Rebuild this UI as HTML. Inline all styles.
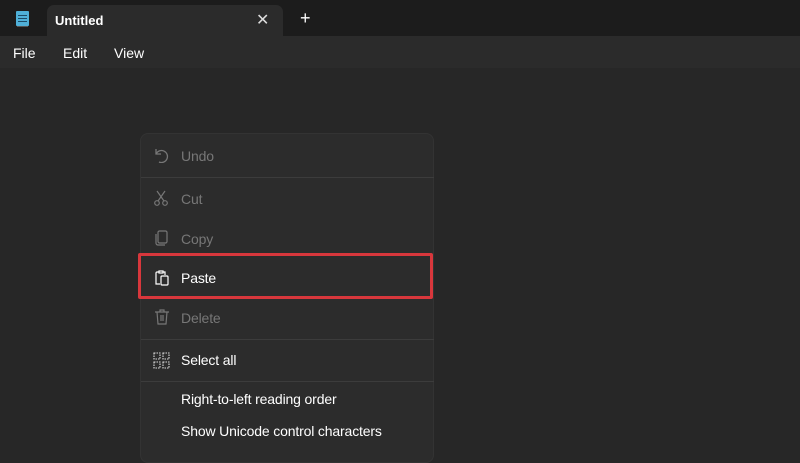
<!DOCTYPE html>
<html><head><style>
*{margin:0;padding:0;box-sizing:border-box}
body{width:800px;height:450px;overflow:hidden;background:#272727;font-family:"Liberation Sans",sans-serif;position:relative}
.title{position:absolute;left:0;top:0;width:800px;height:36px;background:#1c1c1c}
.tab{position:absolute;left:47px;top:5px;width:236px;height:31px;background:#2b2b2b;border-radius:7px 7px 0 0;color:#fff;font-size:13px;font-weight:bold}
.menubar{position:absolute;left:0;top:36px;width:800px;height:32px;background:#2b2b2b;color:#fff;font-size:14px}
.menubar span{position:absolute;top:9px}
.ctx{position:absolute;left:140px;top:133px;width:294px;height:330px;background:#2c2c2c;border:1px solid #333;border-radius:8px;font-size:14px;letter-spacing:-0.15px}
.it{position:absolute;left:40px;color:#fff}
.dis{color:#777}
.sep{position:absolute;left:0;width:293px;height:1px;background:#3c3c3c}
svg{position:absolute}
</style></head><body>
<div class="title">
<svg style="left:16px;top:11px" width="13" height="16" viewBox="0 0 13 16"><rect x="0" y="0" width="13" height="15" rx="1" fill="#4fb0d8"/><rect x="2" y="4" width="9" height="1" fill="#1c4a66"/><rect x="2" y="7" width="9" height="1" fill="#1c4a66"/><rect x="2" y="10" width="9" height="1" fill="#1c4a66"/><rect x="1" y="15" width="11" height="1" fill="#555"/></svg>
<div class="tab"><span style="position:absolute;left:8px;top:8px">Untitled</span>
<span style="position:absolute;left:209px;top:5px;font-weight:normal;font-size:16px;color:#ddd">✕</span></div>
<span style="position:absolute;left:300px;top:8px;color:#fff;font-size:18px">+</span>
</div>
<div class="menubar"><span style="left:13px">File</span><span style="left:63px">Edit</span><span style="left:114px">View</span></div>
<div class="ctx">
<svg style="left:13px;top:13px" width="16" height="16" viewBox="0 0 16 16" fill="none" stroke="#777" stroke-width="1.3"><path d="M2 2v5h5"/><path d="M2 7a6 6 0 1 1 3 8"/></svg>
<div class="it dis" style="top:14px">Undo</div>
<div class="sep" style="top:43px"></div>
<svg style="left:12px;top:56px" width="16" height="16" viewBox="0 0 16 16" fill="none" stroke="#777" stroke-width="1.2"><path d="M4 1l7 10M12 1L5 11"/><circle cx="4" cy="13" r="2.3"/><circle cx="12" cy="13" r="2.3"/></svg>
<div class="it dis" style="top:57px">Cut</div>
<svg style="left:13px;top:96px" width="16" height="16" viewBox="0 0 16 16" fill="none" stroke="#777" stroke-width="1.2"><rect x="4" y="1" width="9" height="12" rx="1.5"/><path d="M2 4v9a2 2 0 0 0 2 2h7"/></svg>
<div class="it dis" style="top:97px">Copy</div>
<svg style="left:13px;top:136px" width="16" height="16" viewBox="0 0 16 16" fill="none" stroke="#fff" stroke-width="1.2"><path d="M5 2H3a1 1 0 0 0-1 1v11h4"/><rect x="5" y="1" width="4" height="2"/><path d="M9 2h2v3"/><rect x="7" y="6" width="7" height="9" rx="1"/></svg>
<div class="it" style="top:136px">Paste</div>
<svg style="left:13px;top:175px" width="16" height="16" viewBox="0 0 16 16" fill="none" stroke="#777" stroke-width="1.2"><path d="M1 3h14M6 3V1h4v2M3 3l1 12h8l1-12M7 6v6M9 6v6"/></svg>
<div class="it dis" style="top:176px">Delete</div>
<div class="sep" style="top:205px"></div>
<svg style="left:12px;top:218px" width="17" height="17" viewBox="0 0 17 17" fill="none" stroke="#ddd" stroke-width="1.1"><rect x="1" y="1" width="6" height="6" stroke-dasharray="1.5 1"/><rect x="10" y="1" width="6" height="6" stroke-dasharray="1.5 1"/><rect x="1" y="10" width="6" height="6" stroke-dasharray="1.5 1"/><rect x="10" y="10" width="6" height="6" stroke-dasharray="1.5 1"/></svg>
<div class="it" style="top:218px">Select all</div>
<div class="sep" style="top:247px"></div>
<div class="it" style="top:257px">Right-to-left reading order</div>
<div class="it" style="top:289px">Show Unicode control characters</div>
</div>
<div style="position:absolute;left:138px;top:253px;width:295px;height:46px;border:3px solid #d8373c;border-radius:2px"></div>
</body></html>
